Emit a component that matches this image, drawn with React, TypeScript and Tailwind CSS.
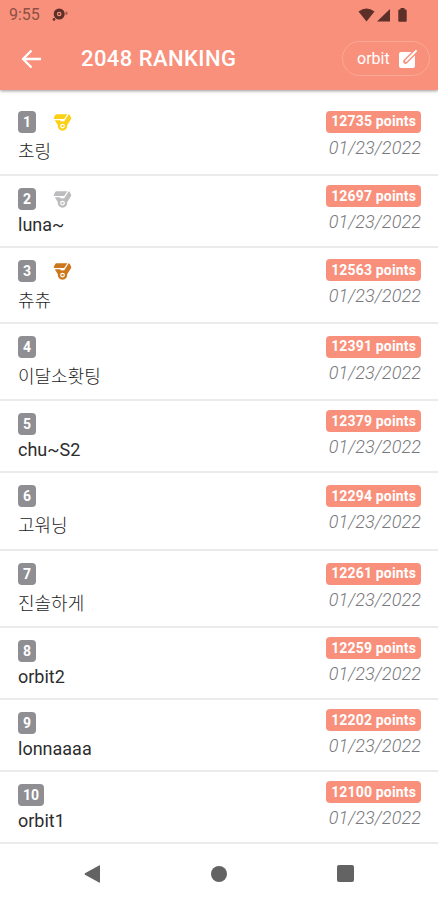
import { IoMedal } from "react-icons/io5"

const latin = "pt-[2px] leading-[26px] text-[#2d2d2d]"
const hangul = "pt-[6px] leading-[26px] font-light text-[#1c1c1c]"

const ranking = [
  { rank: 1, name: "초링", text: hangul, points: 12735, medal: "text-[#fbd015]", height: "h-[77px]" },
  { rank: 2, name: "luna~", text: latin, points: 12697, medal: "text-[#bcbcbe]", height: "h-[72px]" },
  { rank: 3, name: "츄츄", text: hangul, points: 12563, medal: "text-[#cc771c]", height: "h-[76px]" },
  { rank: 4, name: "이달소홧팅", text: hangul, points: 12391, height: "h-[77px]" },
  { rank: 5, name: "chu~S2", text: latin, points: 12379, height: "h-[72px]" },
  { rank: 6, name: "고워닝", text: hangul, points: 12294, height: "h-[78px]" },
  { rank: 7, name: "진솔하게", text: hangul, points: 12261, height: "h-[77px]" },
  { rank: 8, name: "orbit2", text: latin, points: 12259, height: "h-[72px]" },
  { rank: 9, name: "lonnaaaa", text: latin, points: 12202, height: "h-[72px]" },
  { rank: 10, name: "orbit1", text: latin, points: 12100, height: "h-[72px]" },
]

function StatusBar() {
  return (
    <div className="flex h-[29px] items-center justify-between pr-[30px] pl-[9px] text-[#5c3028]">
      <div className="flex items-center gap-3">
        <span className="text-[16px] leading-7 text-[#8d5044]">9:55</span>
        <svg width="17" height="14" viewBox="0 0 17 14">
          <circle cx="7.2" cy="6" r="3.9" fill="none" stroke="currentColor" strokeWidth="3.2" />
          <circle cx="7.2" cy="6" r="1.1" fill="currentColor" />
          <circle cx="2" cy="11.4" r="1.3" fill="currentColor" />
          <path d="M13.5 3.5l2 .7v2l-2 1z" fill="#9c5a4d" />
        </svg>
      </div>
      <svg width="50" height="16" viewBox="0 0 50 16" fill="currentColor">
        <path d="M.5 4.6Q8.5-1.8 16.5 4.6L8.5 14.5z" />
        <path d="M32 2v12.5H19z" />
        <path d="M42.5 1h4v1.5h1.2q1 0 1 1v10.2q0 1-1 1h-6.4q-1 0-1-1V3.5q0-1 1-1h1.2z" />
      </svg>
    </div>
  )
}

function EditIcon() {
  return (
    <svg width="20" height="20" viewBox="0 0 20 20">
      <rect x="1" y="3" width="16" height="16" rx="2" fill="white" />
      <path d="M7.5 12.5L17 3" stroke="#f8907c" strokeWidth="4.6" strokeLinecap="round" />
      <path d="M8 12L18 2" stroke="white" strokeWidth="2" strokeLinecap="round" />
    </svg>
  )
}

function Header() {
  return (
    <header className="h-[90px] shrink-0 bg-[#f8907c] shadow-[0_1px_3px_rgba(0,0,0,0.4)]">
      <StatusBar />
      <div className="flex h-[59px] items-center pr-2 pl-[21px] text-white">
        <svg width="21" height="20" viewBox="0 0 21 20" fill="none" stroke="currentColor" strokeWidth="2.4">
          <path d="M20 10H2.5M10.5 1.5L2 10l8.5 8.5" strokeLinejoin="round" />
        </svg>
        <h1 className="ml-[39px] text-[22px] leading-7 font-medium tracking-[0.43px]">2048 RANKING</h1>
        <button className="ml-auto flex h-[35px] w-[88px] items-center justify-between rounded-full border border-[#fba896] pr-[11px] pl-[14px]">
          <span className="text-[16px] leading-6">orbit</span>
          <EditIcon />
        </button>
      </div>
    </header>
  )
}

export default function App() {
  return (
    <main className="flex h-[900px] w-[438px] flex-col bg-white font-['Roboto','Noto_Sans_CJK_KR',sans-serif]">
      <Header />
      <ul className="pt-[9px]">
        {ranking.map((item) => (
          <li
            key={item.rank}
            className={`flex items-center justify-between border-b-2 border-[#ebebed] pr-[17px] pl-[18px] ${item.height}`}
          >
            <div className="flex h-full flex-col pt-3">
              <div className="flex items-center gap-[17px]">
                <span className="flex h-[22px] items-center rounded-[4px] bg-[#8e8e93] px-[5px] text-[14px] font-bold text-white">
                  {item.rank}
                </span>
                {item.medal && <IoMedal size={19} className={item.medal} />}
              </div>
              <span className={`text-[18px] ${item.text}`}>{item.name}</span>
            </div>
            <div className="flex flex-col items-end pb-[3px]">
              <span className="flex h-[22px] items-center rounded-[4px] bg-[#f8907c] px-[5px] text-[14px] font-bold tracking-[0.16px] text-white">
                {item.points} points
              </span>
              <span className="mt-[3px] text-[18px] leading-6 font-light tracking-[0.1px] text-[#77777c] italic">
                01/23/2022
              </span>
            </div>
          </li>
        ))}
      </ul>
      {/* System navigation */}
      <nav className="flex flex-1 items-center justify-between px-[84px] pt-[3px] text-[#636363]">
        <svg width="17" height="18" viewBox="0 0 17 18" fill="currentColor">
          <path d="M15 .5q1-.5 1 .5v16q0 1-1 .5L1 9.7q-1-.7 0-1.4z" />
        </svg>
        <span className="size-4 rounded-full bg-[#636363]" />
        <span className="size-[17px] rounded-[2px] bg-[#636363]" />
      </nav>
    </main>
  )
}
